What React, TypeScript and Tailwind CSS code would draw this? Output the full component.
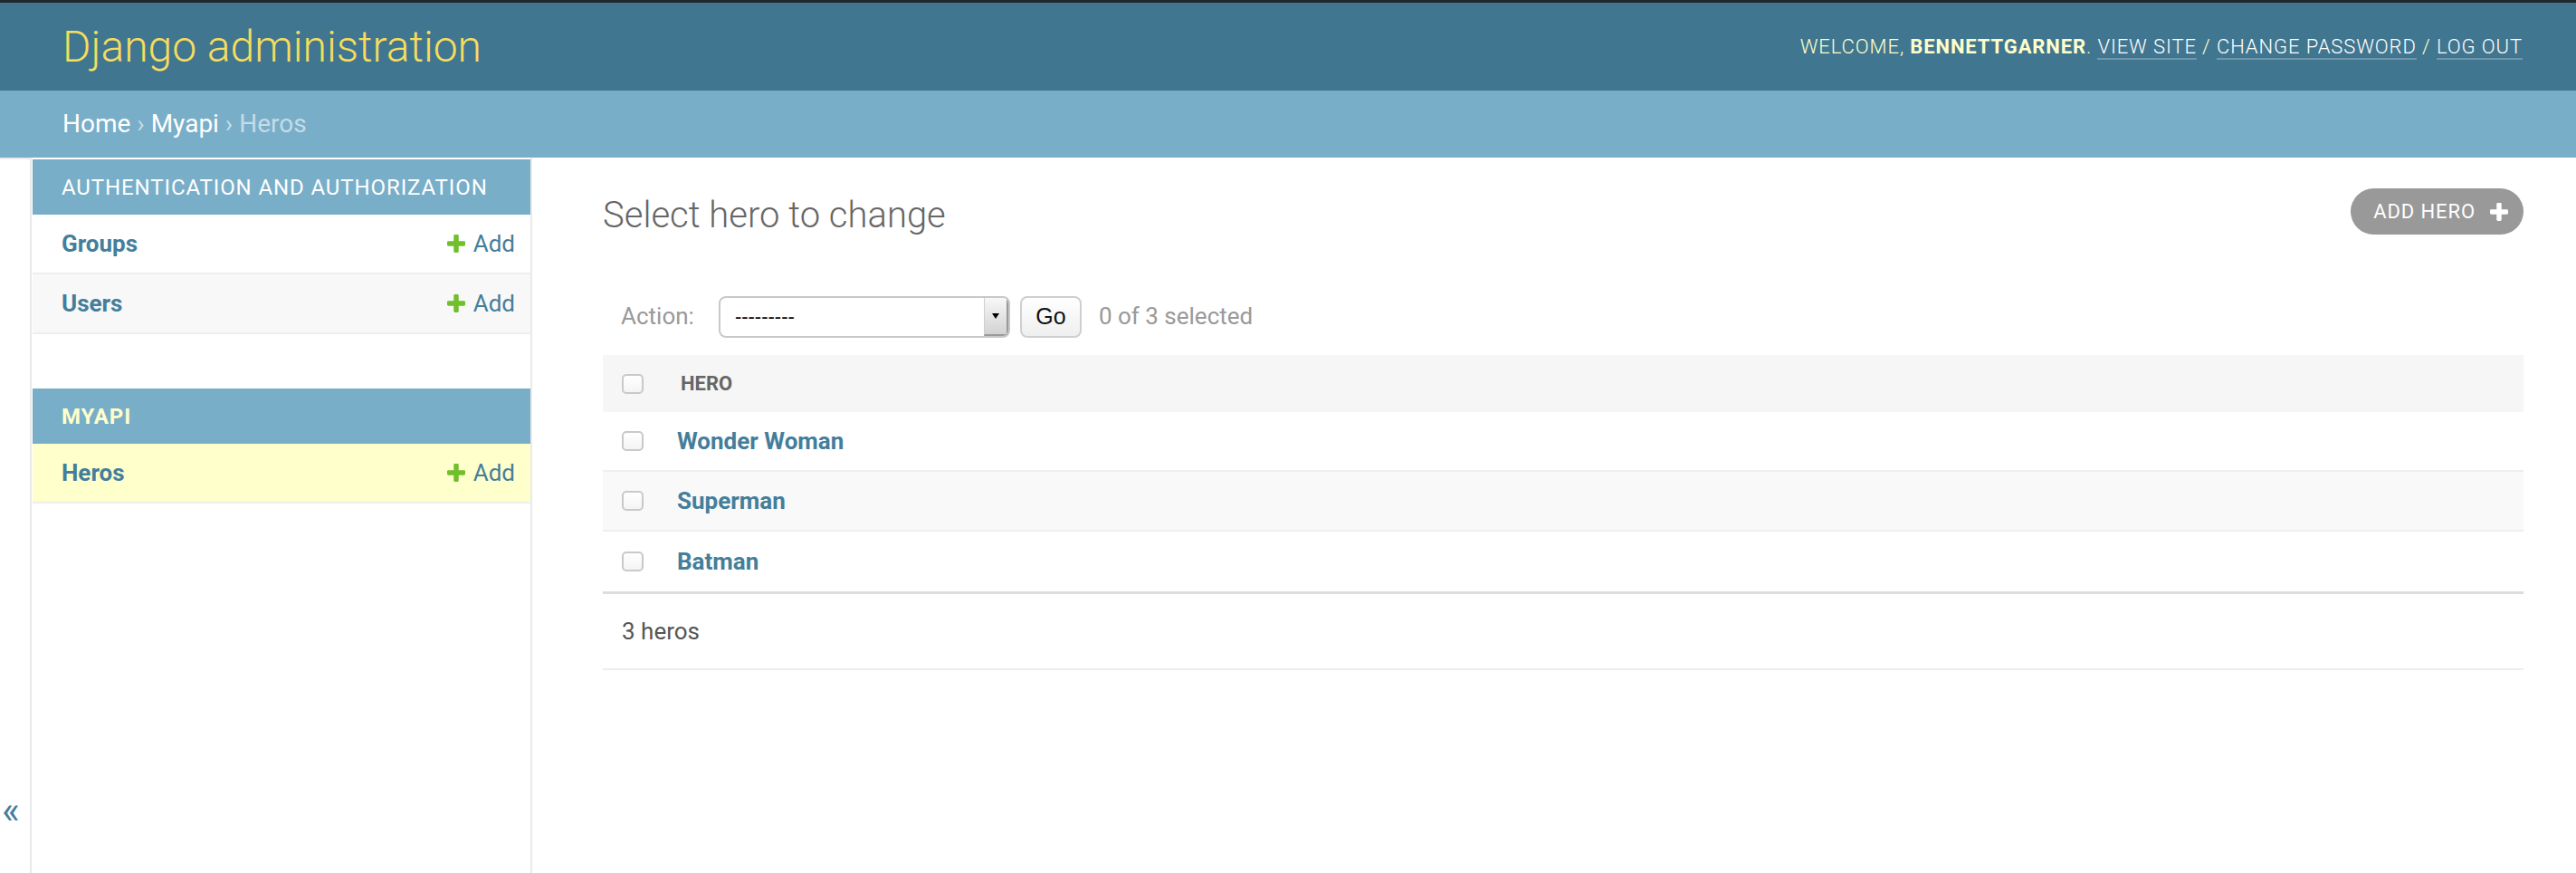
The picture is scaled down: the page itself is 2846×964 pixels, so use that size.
import React from "react";

function PlusIcon({ className, color }: { className?: string; color: string }) {
  return (
    <svg className={className} viewBox="192 192 1408 1408" aria-hidden="true">
      <path
        fill={color}
        d="M1600 796v192q0 40-28 68t-68 28h-416v416q0 40-28 68t-68 28h-192q-40 0-68-28t-28-68v-416h-416q-40 0-68-28t-28-68v-192q0-40 28-68t68-28h416v-416q0-40 28-68t68-28h192q40 0 68 28t28 68v416h416q40 0 68 28t28 68z"
      />
    </svg>
  );
}

function Checkbox() {
  return (
    <div className="h-[22px] w-[24px] shrink-0 rounded-[5px] border-2 border-[#c9c9c9] bg-gradient-to-b from-white to-[#f4f4f4]" />
  );
}

function ModelRow({ name, alt, current }: { name: string; alt?: boolean; current?: boolean }) {
  const bg = current ? "bg-[#ffffcc]" : alt ? "bg-[#f8f8f8]" : "bg-white";
  return (
    <div className={`flex h-[66px] items-center justify-between border-b-2 border-[#eeeeee] pl-[32px] pr-[17px] ${bg}`}>
      <span className="text-[26px] font-bold text-[#447e9b]">{name}</span>
      <span className="flex items-center text-[26px] text-[#447e9b]">
        <PlusIcon className="mr-[9px] h-[20px] w-[20px]" color="#70bf2b" />
        Add
      </span>
    </div>
  );
}

function Caption({ children, current }: { children: React.ReactNode; current?: boolean }) {
  return (
    <div
      className={`flex h-[61px] items-center bg-[#79aec8] pl-[32px] text-[24px] uppercase tracking-[0.9px] ${
        current ? "font-bold text-[#ffffcc]" : "text-white"
      }`}
    >
      {children}
    </div>
  );
}

const heroes = ["Wonder Woman", "Superman", "Batman"];

export default function App() {
  return (
    <div className="h-[964px] w-[2846px] overflow-hidden bg-white font-['Roboto','Liberation_Sans',sans-serif] text-[#333]">
      <div className="h-[3px] bg-[#22272b]" />
      <header className="flex h-[97px] items-center justify-between bg-[#417690] pl-[69px] pr-[59px]">
        <h1 className="text-[48px] font-light text-[#f5dd5d]">Django administration</h1>
        <div className="text-[22px] font-light uppercase tracking-[0.9px] text-[#ffffcc]">
          Welcome, <strong className="font-bold">bennettgarner</strong>.{" "}
          <a className="border-b-2 border-white/25 text-white">View site</a> /{" "}
          <a className="border-b-2 border-white/25 text-white">Change password</a> /{" "}
          <a className="border-b-2 border-white/25 text-white">Log out</a>
        </div>
      </header>
      <nav className="flex h-[74px] items-center whitespace-pre bg-[#79aec8] px-[69px] text-[28px] text-[#c4dce8]">
        <a className="text-white">Home</a>
        <span>{" › "}</span>
        <a className="text-white">Myapi</a>
        <span>{" › "}</span>
        <span>Heros</span>
      </nav>
      <div className="flex h-[790px]">
        <div className="flex w-[35px] shrink-0 flex-col border-t-2 border-r-2 border-[#eaeaea] pl-[2px] pt-[698px]">
          <span className="text-[42px] leading-none text-[#447e9b]">«</span>
        </div>
        <aside className="w-[553px] shrink-0 border-r-2 border-[#eaeaea] pl-[1px] pt-[2px]">
          <div className="mb-[60px]">
            <Caption>Authentication and Authorization</Caption>
            <ModelRow name="Groups" />
            <ModelRow name="Users" alt />
          </div>
          <div>
            <Caption current>Myapi</Caption>
            <ModelRow name="Heros" current />
          </div>
        </aside>
        <main className="flex-1 pl-[78px] pr-[58px] pt-[34px]">
          <div className="flex items-end justify-between">
            <h1 className="text-[40px] font-light leading-[43px] text-[#666]">Select hero to change</h1>
            <button className="flex h-[51px] items-center rounded-full bg-[#999] pl-[25px] pr-[17px] text-[22px] uppercase tracking-[0.9px] text-white">
              Add hero
              <PlusIcon className="ml-[16px] h-[20px] w-[20px]" color="#ffffff" />
            </button>
          </div>

          <div className="mt-[48px] flex h-[85px] items-center pl-[20px] text-[26px] text-[#999]">
            <span>Action:</span>
            <div className="ml-[27px] flex h-[46px] w-[322px] items-stretch overflow-hidden rounded-[8px] border-2 border-[#c8c8c8] bg-white">
              <div className="flex flex-1 items-center pl-[16px] font-['Liberation_Sans',sans-serif] text-[22px] text-black">
                ---------
              </div>
              <div className="flex w-[27px] items-center justify-center border-l border-[#cfcfcf] border-r-2 border-b-2 border-r-[#9a9a9a] border-b-[#9a9a9a] bg-gradient-to-b from-[#f8f8f8] to-[#d2d2d2]">
                <div className="h-0 w-0 border-x-[4px] border-t-[6px] border-x-transparent border-t-black" />
              </div>
            </div>
            <button className="ml-[11px] flex h-[46px] w-[68px] items-center justify-center rounded-[8px] border-2 border-[#cfcfcf] bg-gradient-to-b from-white to-[#efefef] font-['Liberation_Sans',sans-serif] text-[25px] text-[#111]">
              Go
            </button>
            <span className="ml-[19px]">0 of 3 selected</span>
          </div>

          <div className="flex h-[63px] items-center bg-[#f6f6f6] pl-[21px]">
            <Checkbox />
            <span className="ml-[41px] text-[22px] font-bold uppercase text-[#666]">Hero</span>
          </div>
          {heroes.map((h, i) => (
            <div
              key={h}
              className={`flex h-[66px] items-center pl-[21px] ${i % 2 === 1 ? "bg-[#f9f9f9]" : "bg-white"} ${
                i < heroes.length - 1 ? "border-b-2 border-[#eeeeee]" : ""
              }`}
            >
              <Checkbox />
              <a className="ml-[37px] text-[26px] font-bold text-[#447e9b]">{h}</a>
            </div>
          ))}
          <div className="flex h-[87px] items-center border-t-[3px] border-b-2 border-t-[#dddddd] border-b-[#eeeeee] pl-[21px] text-[26px] text-[#555]">
            3 heros
          </div>
        </main>
      </div>
    </div>
  );
}
